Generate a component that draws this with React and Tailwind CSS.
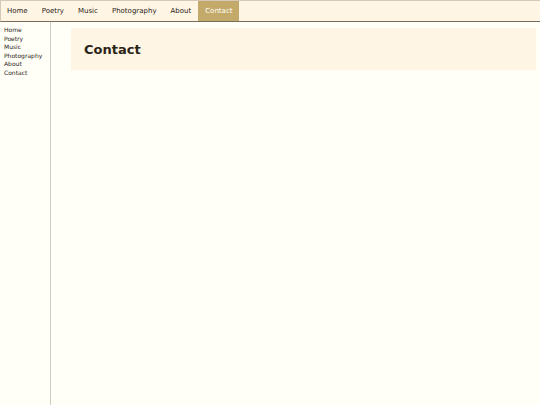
const pages = ["Home", "Poetry", "Music", "Photography", "About", "Contact"];
const current = "Contact";

function TopNav() {
  return (
    <nav
      aria-label="Main"
      className="flex h-[22px] border border-r-0 border-t-[#d6c9ba] border-b-[#786c5b] border-l-[#d6c9ba] bg-[#fff5e4] text-[7px]"
    >
      {pages.map((page) => (
        <a
          key={page}
          href="#"
          aria-current={page === current ? "page" : undefined}
          className={
            page === current
              ? "flex items-center bg-[#c4aa6a] px-[7px] text-[#fffff7]"
              : "flex items-center px-[7px] first:pl-1.5"
          }
        >
          {page}
        </a>
      ))}
    </nav>
  );
}

function Sidebar() {
  return (
    <nav
      aria-label="Site"
      className="w-[51px] shrink-0 border-r border-[#d0cdc0] px-1 pt-1 text-[6px] leading-[8px]"
    >
      <ul className="flex h-[51px] flex-col justify-between">
        {pages.map((page) => (
          <li key={page}>
            <a href="#">{page}</a>
          </li>
        ))}
      </ul>
    </nav>
  );
}

export default function App() {
  return (
    <div className="flex min-h-screen flex-col bg-[#fffff7] font-['DejaVu_Sans',sans-serif] text-[#2b2418]">
      <TopNav />
      <div className="flex grow">
        <Sidebar />
        <main className="grow pt-1.5 pr-1 pl-5">
          <header className="flex h-[42px] items-center bg-[#fff5e4] px-[13px] pt-0.5">
            <h1 className="text-[13px] font-bold">Contact</h1>
          </header>
        </main>
      </div>
    </div>
  );
}
